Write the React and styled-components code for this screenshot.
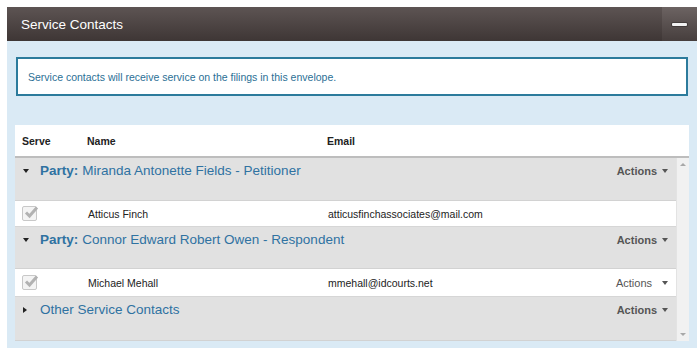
import React from 'react'
import styled, { createGlobalStyle } from 'styled-components'

const GlobalStyle = createGlobalStyle`
  html, body {
    margin: 0;
    padding: 0;
    background: #ffffff;
    font-family: "Liberation Sans", Arial, sans-serif;
  }
`

const Page = styled.div`
  padding: 7px 3px 0 7px;
  height: 348px;
  box-sizing: border-box;
  overflow: hidden;
`

const Panel = styled.section`
  display: flex;
  flex-direction: column;
  height: 341px;
  background: #daeaf5;
`

const PanelHeader = styled.header`
  display: flex;
  align-items: stretch;
  height: 34px;
  background: linear-gradient(to bottom, #5d5453 0%, #3e3635 100%);
`

const PanelTitle = styled.h2`
  flex: 1;
  margin: 0;
  padding-left: 14px;
  display: flex;
  align-items: center;
  color: #ffffff;
  font-size: 13.5px;
  font-weight: 400;
`

const CollapseButton = styled.button`
  width: 35px;
  border: none;
  padding: 0;
  display: flex;
  align-items: center;
  justify-content: center;
  background: linear-gradient(to bottom, #6c6362 0%, #463e3d 100%);
  cursor: pointer;

  span {
    display: block;
    width: 15px;
    height: 3px;
    background: #f2f2f2;
    border-radius: 1px;
    box-shadow: 0 0 0 1px rgba(0, 0, 0, 0.25);
  }
`

const PanelBody = styled.div`
  flex: 1;
  padding: 16px 8px 0 8px;
  display: flex;
  flex-direction: column;
  min-height: 0;
`

const Notice = styled.div`
  margin: 0 1px;
  height: 39px;
  box-sizing: border-box;
  border: 2px solid #2c7b9c;
  background: #ffffff;
  display: flex;
  align-items: center;
  padding-left: 10px;
  color: #2b6f95;
  font-size: 10.5px;
`

const Table = styled.div`
  margin-top: 29px;
  background: #ffffff;
  display: flex;
  flex-direction: column;
`

const Columns = styled.div`
  display: grid;
  grid-template-columns: 65px 240px 1fr auto;
  align-items: center;
`

const HeadRow = styled(Columns)`
  height: 31px;
  border-bottom: 2px solid #bdbdbd;
  font-size: 10.5px;
  font-weight: 700;
  color: #222;
  padding-left: 7px;
`

const ScrollArea = styled.div`
  display: flex;
  height: 183px;
`

const Rows = styled.div`
  flex: 1;
  display: flex;
  flex-direction: column;
`

const Scrollbar = styled.div`
  width: 13px;
  background: #f1f1f1;
  border-left: 1px solid #e3e3e3;
  display: flex;
  flex-direction: column;
  justify-content: space-between;
  align-items: center;
  padding: 5px 0;
  box-sizing: border-box;
`

const ScrollArrow = styled.span`
  width: 0;
  height: 0;
  border-left: 3px solid transparent;
  border-right: 3px solid transparent;
  ${({ $down }) =>
    $down ? 'border-top: 3px solid #a8a8a8;' : 'border-bottom: 3px solid #a8a8a8;'}
`

const GroupRow = styled.div`
  height: ${({ $h }) => $h}px;
  background: #e1e1e1;
  border-bottom: 1px solid #d2d2d2;
  box-sizing: border-box;
  display: flex;
  align-items: flex-start;
  padding: 5px 8px 0 6px;
`

const GroupTitle = styled.div`
  flex: 1;
  display: flex;
  align-items: center;
  color: #2f72a1;
  font-size: 13.5px;
  line-height: 16px;

  b {
    font-weight: 700;
    margin-right: 4px;
  }
`

const Caret = styled.span`
  display: inline-block;
  width: 0;
  height: 0;
  margin-left: 2px;
  ${({ $open }) =>
    $open
      ? 'border-left: 3.5px solid transparent; border-right: 3.5px solid transparent; border-top: 4px solid #222; margin-right: 11px;'
      : 'border-top: 3.5px solid transparent; border-bottom: 3.5px solid transparent; border-left: 4px solid #222; margin-right: 13px;'}
`

const Actions = styled.div`
  display: flex;
  align-items: center;
  gap: ${({ $bold }) => ($bold ? 5 : 10)}px;
  margin-top: 2px;
  font-size: 11px;
  font-weight: ${({ $bold }) => ($bold ? 700 : 400)};
  color: #555;

  &::after {
    content: '';
    border-left: 3.5px solid transparent;
    border-right: 3.5px solid transparent;
    border-top: 4px solid #555;
  }
`

const ContactRow = styled(Columns)`
  height: ${({ $h }) => $h}px;
  background: #ffffff;
  border-bottom: 1px solid #d6d6d6;
  box-sizing: border-box;
  font-size: 10.5px;
  color: #222;
  padding: 0 8px 0 7px;

  ${Actions} {
    margin-top: 0;
  }
`

const Check = styled.span`
  position: relative;
  width: 15px;
  height: 15px;
  box-sizing: border-box;
  border: 1px solid #c8c8c8;
  border-radius: 2px;
  background: #f4f4f4;

  svg {
    position: absolute;
    left: 1px;
    top: -2px;
  }
`

function CheckBox() {
  return (
    <Check>
      <svg width="15" height="14" viewBox="0 0 15 14">
        <path d="M2 7.5 L5.5 11 L13 2.5" fill="none" stroke="#b2b2b2" strokeWidth="3" />
      </svg>
    </Check>
  )
}

const Cell = styled.span`
  padding-left: 1px;
`

const data = [
  {
    party: 'Miranda Antonette Fields - Petitioner',
    h: 43,
    contact: { name: 'Atticus Finch', email: 'atticusfinchassociates@mail.com', h: 26 },
  },
  {
    party: 'Connor Edward Robert Owen - Respondent',
    h: 42,
    contact: { name: 'Michael Mehall', email: 'mmehall@idcourts.net', h: 28, actions: true },
  },
]

export default function App() {
  return (
    <Page>
      <GlobalStyle />
      <Panel>
        <PanelHeader>
          <PanelTitle>Service Contacts</PanelTitle>
          <CollapseButton aria-label="Collapse">
            <span />
          </CollapseButton>
        </PanelHeader>
        <PanelBody>
          <Notice>Service contacts will receive service on the filings in this envelope.</Notice>
          <Table>
            <HeadRow>
              <span>Serve</span>
              <span>Name</span>
              <span>Email</span>
              <span />
            </HeadRow>
            <ScrollArea>
              <Rows>
                {data.map(group => (
                  <React.Fragment key={group.party}>
                    <GroupRow $h={group.h}>
                      <GroupTitle>
                        <Caret $open />
                        <b>Party:</b>
                        {group.party}
                      </GroupTitle>
                      <Actions $bold>Actions</Actions>
                    </GroupRow>
                    <ContactRow $h={group.contact.h}>
                      <CheckBox />
                      <Cell>{group.contact.name}</Cell>
                      <Cell>{group.contact.email}</Cell>
                      {group.contact.actions ? <Actions>Actions</Actions> : <span />}
                    </ContactRow>
                  </React.Fragment>
                ))}
                <GroupRow $h={44}>
                  <GroupTitle>
                    <Caret />
                    Other Service Contacts
                  </GroupTitle>
                  <Actions $bold>Actions</Actions>
                </GroupRow>
              </Rows>
              <Scrollbar>
                <ScrollArrow />
                <ScrollArrow $down />
              </Scrollbar>
            </ScrollArea>
          </Table>
        </PanelBody>
      </Panel>
    </Page>
  )
}
